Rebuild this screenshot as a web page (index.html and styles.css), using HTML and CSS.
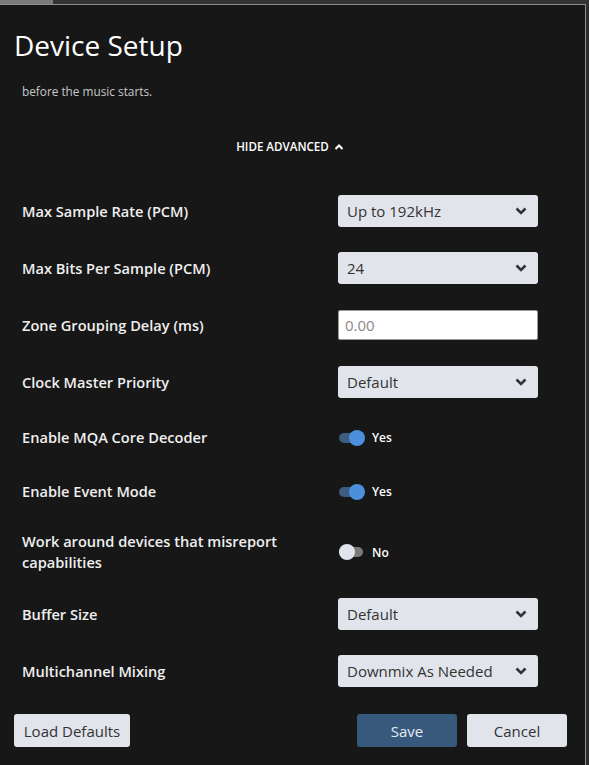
FILE: index.html
```html
<!DOCTYPE html>
<html>
<head>
<meta charset="utf-8">
<link rel="stylesheet" href="styles.css">
</head>
<body>
<div class="backdrop"><div class="thumb"></div></div>
<div class="dialog">
  <div class="header"><h1 class="title">Device Setup</h1></div>
  <div class="body">
    <div class="content">
      <p class="desc">before the music starts.</p>
      <div class="advanced">HIDE ADVANCED
        <svg class="chev-up" width="10" height="8" viewBox="0 0 10 8"><path d="M1.5 6 L5 2.5 L8.5 6" fill="none" stroke="#fff" stroke-width="2"/></svg>
      </div>
      <div class="rows">
        <div class="row"><span class="label">Max Sample Rate (PCM)</span>
          <div class="select">Up to 192kHz<svg class="chev" width="12" height="8" viewBox="0 0 12 8"><path d="M1.5 1.5 L6 6 L10.5 1.5" fill="none" stroke="#333" stroke-width="2.6"/></svg></div></div>
        <div class="row"><span class="label">Max Bits Per Sample (PCM)</span>
          <div class="select">24<svg class="chev" width="12" height="8" viewBox="0 0 12 8"><path d="M1.5 1.5 L6 6 L10.5 1.5" fill="none" stroke="#333" stroke-width="2.6"/></svg></div></div>
        <div class="row"><span class="label">Zone Grouping Delay (ms)</span>
          <div class="input">0.00</div></div>
        <div class="row"><span class="label">Clock Master Priority</span>
          <div class="select">Default<svg class="chev" width="12" height="8" viewBox="0 0 12 8"><path d="M1.5 1.5 L6 6 L10.5 1.5" fill="none" stroke="#333" stroke-width="2.6"/></svg></div></div>
        <div class="row row-toggle"><span class="label">Enable MQA Core Decoder</span>
          <div class="toggle-wrap"><span class="toggle on"><span class="knob"></span></span><span class="tlabel">Yes</span></div></div>
        <div class="row row-toggle"><span class="label">Enable Event Mode</span>
          <div class="toggle-wrap"><span class="toggle on"><span class="knob"></span></span><span class="tlabel">Yes</span></div></div>
        <div class="row row-toggle"><span class="label label-wrap">Work around devices that misreport capabilities</span>
          <div class="toggle-wrap"><span class="toggle off"><span class="knob"></span></span><span class="tlabel">No</span></div></div>
        <div class="row"><span class="label">Buffer Size</span>
          <div class="select">Default<svg class="chev" width="12" height="8" viewBox="0 0 12 8"><path d="M1.5 1.5 L6 6 L10.5 1.5" fill="none" stroke="#333" stroke-width="2.6"/></svg></div></div>
        <div class="row"><span class="label">Multichannel Mixing</span>
          <div class="select">Downmix As Needed<svg class="chev" width="12" height="8" viewBox="0 0 12 8"><path d="M1.5 1.5 L6 6 L10.5 1.5" fill="none" stroke="#333" stroke-width="2.6"/></svg></div></div>
      </div>
    </div>
  </div>
  <div class="footer">
    <button class="btn light btn-defaults">Load Defaults</button>
    <div class="spacer"></div>
    <button class="btn primary">Save</button>
    <button class="btn light">Cancel</button>
  </div>
</div>
</body>
</html>
```

FILE: styles.css
```css
html, body {
  margin: 0;
  padding: 0;
}
body {
  background: #2e2e2e;
  font-family: "Open Sans", "Noto Sans", sans-serif;
  width: 589px;
  height: 765px;
  overflow: hidden;
}
.backdrop {
  height: 4px;
  background: #333333;
  display: flex;
}
.thumb {
  width: 53px;
  height: 4px;
  background: #7b7b7b;
}
.dialog {
  width: 585px;
  height: 760px;
  background: #171717;
  border-top: 1px solid #8d9098;
  border-right: 1px solid #8d9098;
  display: flex;
  flex-direction: column;
  overflow: hidden;
}
.header {
  height: 75px;
  padding: 22px 14px 0 14px;
  box-sizing: border-box;
  flex: none;
}
.title {
  margin: 0;
  font-size: 28px;
  line-height: 36px;
  font-weight: 500;
  color: #ffffff;
}
.body {
  flex: 1;
  overflow: hidden;
}
.content {
  padding: 0 47px 0 22px;
}
.desc {
  margin: 3px 0 0 0;
  font-size: 11.8px;
  line-height: 16px;
  color: #c8c8c8;
  font-weight: 500;
}
.advanced {
  margin-top: 40px;
  text-align: center;
  font-size: 11.6px;
  font-weight: 600;
  color: #ffffff;
  line-height: 16px;
  padding-left: 20px;
}
.chev-up {
  margin-left: 2px;
  vertical-align: 0px;
}
.rows {
  margin-top: 40px;
  display: flex;
  flex-direction: column;
  gap: 25px;
}
.row {
  display: flex;
  align-items: center;
  justify-content: space-between;
  min-height: 32px;
}
.row-toggle {
  min-height: 29px;
}
.label {
  font-size: 14.6px;
  font-weight: 600;
  color: #efefef;
  line-height: 21px;
}
.label-wrap {
  width: 280px;
}
.select {
  width: 200px;
  height: 32px;
  box-sizing: border-box;
  background: #e1e4eb;
  border-radius: 3px;
  display: flex;
  align-items: center;
  justify-content: space-between;
  padding: 0 11px 0 9px;
  font-size: 15px;
  color: #333333;
}
.input {
  width: 200px;
  height: 30px;
  box-sizing: border-box;
  background: #ffffff;
  border: 1px solid #9a9a9a;
  border-radius: 2px;
  display: flex;
  align-items: center;
  padding: 0 6px;
  font-size: 15px;
  color: #8a8a8a;
}
.toggle-wrap {
  width: 200px;
  display: flex;
  align-items: center;
  gap: 9px;
}
.toggle {
  position: relative;
  width: 24px;
  height: 10px;
  border-radius: 5px;
  margin-left: 1px;
}
.toggle.on { background: #3d5d80; }
.toggle.off { background: #7a7a7a; }
.knob {
  position: absolute;
  top: -3px;
  width: 16px;
  height: 16px;
  border-radius: 50%;
}
.toggle.on .knob { left: 10px; background: #4b90dc; }
.toggle.off .knob { left: 0; background: #e1e4eb; }
.tlabel {
  font-size: 12px;
  font-weight: 600;
  color: #ffffff;
}
.footer {
  flex: none;
  display: flex;
  align-items: center;
  padding: 10px 18px 18px 14px;
  gap: 10px;
}
.spacer { flex: 1; }
.btn {
  font-family: "Open Sans", "Noto Sans", sans-serif;
  font-size: 15px;
  height: 33px;
  border: none;
  border-radius: 3px;
  width: 100px;
  padding: 0;
}
.btn-defaults { width: 116px; }
.btn.light { background: #e1e4eb; color: #333333; }
.btn.primary { background: #375a7c; color: #e6ebf1; }
```
